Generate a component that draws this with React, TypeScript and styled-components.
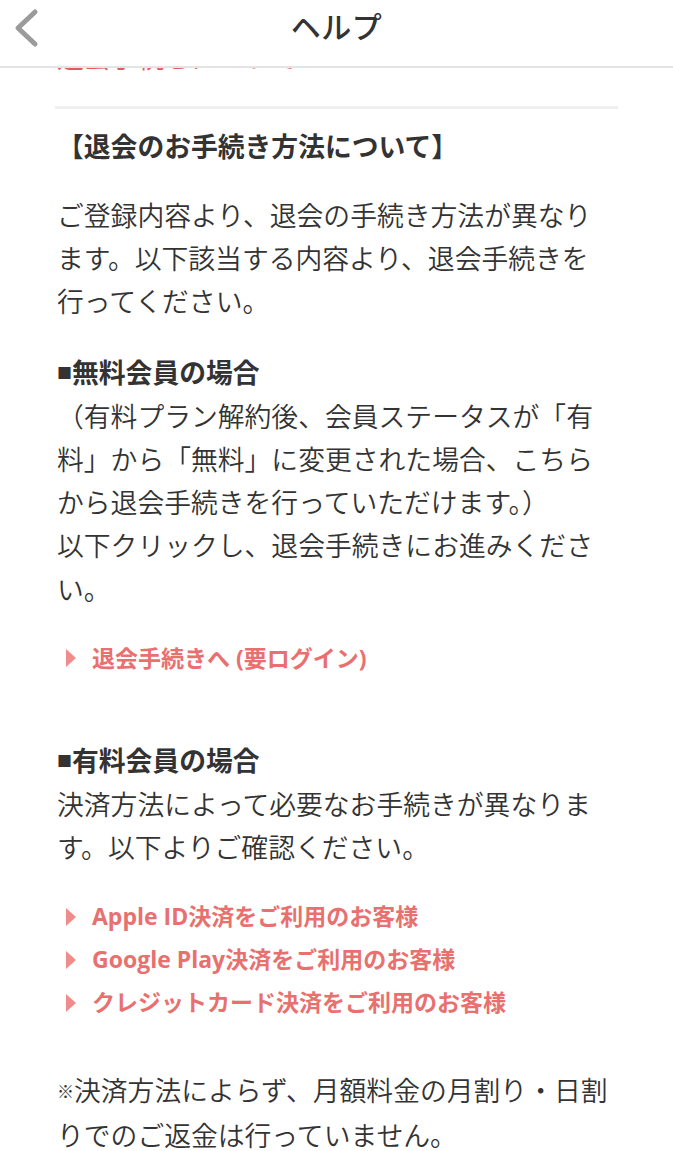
import React from "react";
import styled, { createGlobalStyle } from "styled-components";

const Global = createGlobalStyle`
  html, body { margin: 0; padding: 0; background: #ffffff; }
  body {
    font-family: "Noto Sans CJK JP", "Noto Sans", sans-serif;
    color: #333333;
    -webkit-font-smoothing: antialiased;
  }
`;

const Header = styled.header`
  position: fixed;
  top: 0;
  left: 0;
  right: 0;
  height: 66px;
  background: #ffffff;
  border-bottom: 2px solid #e4e4e4;
  display: grid;
  grid-template-columns: 1fr auto 1fr;
  align-items: start;
  z-index: 10;
`;

const BackButton = styled.button`
  justify-self: start;
  border: none;
  background: none;
  padding: 8px 0 0 12px;
  margin: 0;
  width: 40px;
  height: 50px;
  cursor: pointer;
`;

const HeaderTitle = styled.h1`
  margin: 0;
  padding-top: 6px;
  font-size: 30px;
  line-height: 38px;
  font-weight: 500;
  color: #333333;
  letter-spacing: 0.5px;
`;

const Content = styled.main`
  padding: 35px 58px 40px 57px;
  font-size: 26.8px;
  line-height: 43.3px;
`;

const FaqTitle = styled.div`
  color: #e05c5c;
  font-size: 26.8px;
  line-height: 43px;
`;

const Divider = styled.hr`
  margin: 28px -3px 0 -2px;
  border: none;
  height: 3px;
  background: #efefef;
`;

const SectionTitle = styled.h2<{ $top: number }>`
  margin: ${(p) => p.$top}px 0 0;
  font-size: 26.8px;
  line-height: 43px;
  font-weight: 700;
  color: #333333;
`;

const Paragraph = styled.p<{ $top: number }>`
  margin: ${(p) => p.$top}px 0 0;
  font-size: 26.8px;
  line-height: 43.2px;
  font-weight: 350;
  color: #333333;
`;

const Subhead = styled.strong`
  font-weight: 700;
  color: #333333;
`;

const Marker = styled.span<{ $size: number; $lift: number }>`
  font-size: ${(p) => p.$size}px;
  vertical-align: ${(p) => p.$lift}px;
`;

const LinkList = styled.ul<{ $top: number }>`
  list-style: none;
  margin: ${(p) => p.$top}px 0 0;
  padding: 0;
`;

const LinkItem = styled.li`
  display: flex;
  align-items: center;
  height: 43px;
  font-family: "Open Sans", "Noto Sans CJK JP", sans-serif;
  font-size: 23px;
  font-weight: 700;
  color: #e8706f;
  &::before {
    content: "";
    display: block;
    width: 0;
    height: 0;
    border-left: 10px solid #f08d8c;
    border-top: 9px solid transparent;
    border-bottom: 9px solid transparent;
    margin: 0 16px 0 9px;
  }
`;

const LinkText = styled.a`
  color: inherit;
  text-decoration: none;
`;

const Chevron = () => (
  <svg width="26" height="40" viewBox="0 0 26 40" fill="none">
    <polyline
      points="22,4 5,20 22,36"
      stroke="#9b9b9b"
      strokeWidth="5"
      strokeLinecap="round"
      strokeLinejoin="round"
    />
  </svg>
);

export default function App() {
  return (
    <>
      <Global />
      <Header>
        <BackButton aria-label="戻る">
          <Chevron />
        </BackButton>
        <HeaderTitle>ヘルプ</HeaderTitle>
        <div />
      </Header>
      <Content>
        <FaqTitle>退会手続きについて</FaqTitle>
        <Divider />
        <SectionTitle $top={15}>【退会のお手続き方法について】</SectionTitle>
        <Paragraph $top={26}>
          ご登録内容より、退会の手続き方法が異なります。以下該当する内容より、退会手続きを行ってください。
        </Paragraph>
        <Paragraph $top={27}>
          <Subhead>
            <Marker $size={15} $lift={4}>■</Marker>無料会員の場合
          </Subhead>
          <br />
          （有料プラン解約後、会員ステータスが「有料」から「無料」に変更された場合、こちらから退会手続きを行っていただけます。）
          <br />
          以下クリックし、退会手続きにお進みください。
        </Paragraph>
        <LinkList $top={27}>
          <LinkItem>
            <LinkText href="#">退会手続きへ (要ログイン)</LinkText>
          </LinkItem>
        </LinkList>
        <Paragraph $top={58}>
          <Subhead>
            <Marker $size={15} $lift={4}>■</Marker>有料会員の場合
          </Subhead>
          <br />
          決済方法によって必要なお手続きが異なります。以下よりご確認ください。
        </Paragraph>
        <LinkList $top={27}>
          <LinkItem>
            <LinkText href="#">Apple ID決済をご利用のお客様</LinkText>
          </LinkItem>
          <LinkItem>
            <LinkText href="#">Google Play決済をご利用のお客様</LinkText>
          </LinkItem>
          <LinkItem>
            <LinkText href="#">クレジットカード決済をご利用のお客様</LinkText>
          </LinkItem>
        </LinkList>
        <Paragraph $top={44}>
          <Marker $size={17} $lift={3}>※</Marker>決済方法によらず、月額料金の月割り・日割りでのご返金は行っていません。
        </Paragraph>
      </Content>
    </>
  );
}
